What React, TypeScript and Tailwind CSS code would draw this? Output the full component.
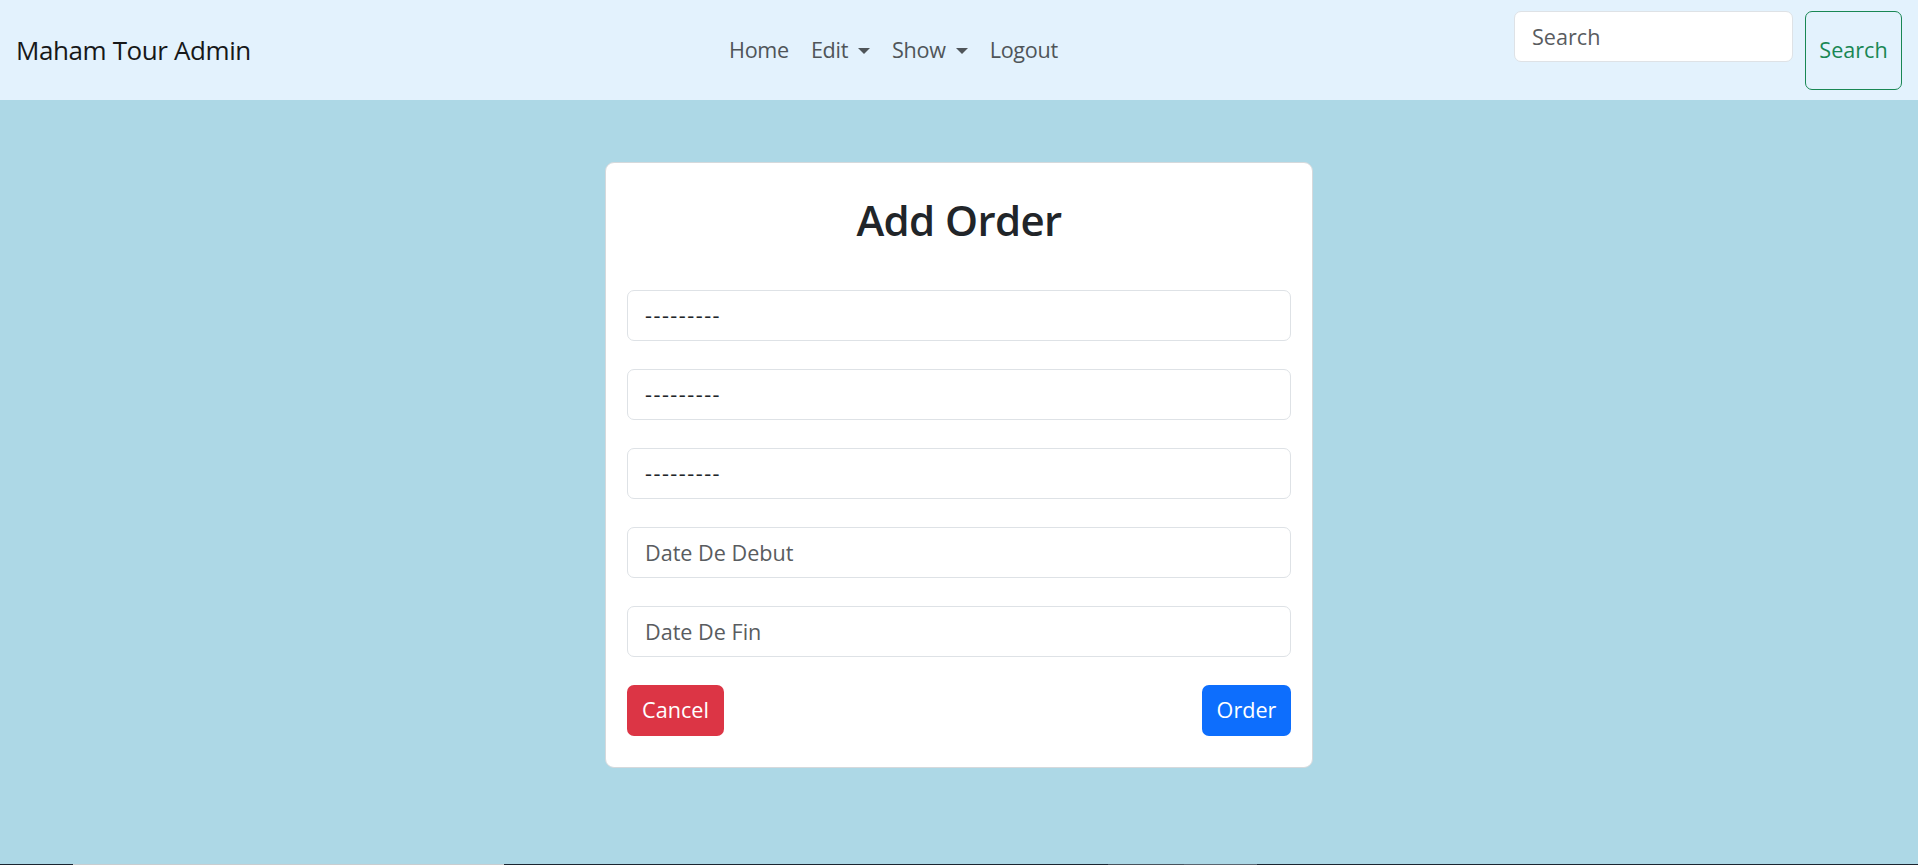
import { useState } from "react";

type Field = {
    kind: "select" | "text",
    label: string
}

const fields: Field[] = [
    { kind: "select", label: "---------" },
    { kind: "select", label: "---------" },
    { kind: "select", label: "---------" },
    { kind: "text", label: "Date De Debut" },
    { kind: "text", label: "Date De Fin" },
]

function Caret() {
    return (
        <span className="ml-[10px] inline-block h-0 w-0 border-x-[6px] border-t-[6px] border-x-transparent border-t-[#4f5559] align-[4px]"></span>
    )
}

function NavBar() {
    const [query, setQuery] = useState("")

    return (
        <nav className="flex h-[100px] items-center bg-[#e3f2fd] px-[16px]">
            <a href="#" className="mr-[22px] text-[26px] leading-[1.5] tracking-[-0.4px] text-[#171819]">
                Maham Tour Admin
            </a>
            <div className="flex flex-1">
                <ul className="mx-auto flex items-center text-[21.6px] leading-[1.5] tracking-[-0.3px] text-[#4f5559]">
                    <li><a href="#" className="block px-[11px]">Home</a></li>
                    <li><a href="#" className="block px-[11px]">Edit<Caret /></a></li>
                    <li><a href="#" className="block px-[11px]">Show<Caret /></a></li>
                    <li><a href="#" className="block px-[11px]">Logout</a></li>
                </ul>
            </div>
            <form className="flex items-start gap-[12px]" onSubmit={(e) => e.preventDefault()}>
                <input
                    value={query}
                    onChange={(e) => setQuery(e.target.value)}
                    placeholder="Search"
                    className="h-[51px] w-[279px] rounded-[7px] border border-[#dee2e6] bg-white px-[17px] text-[21.6px] text-[#212529] outline-none placeholder:text-[#595c5f]"
                />
                <button className="h-[79px] w-[97px] rounded-[7px] border border-[#198754] text-[21.6px] text-[#198754]">
                    Search
                </button>
            </form>
        </nav>
    )
}

function OrderForm() {
    return (
        <div className="mx-auto mt-[62px] w-[708px] rounded-[9px] border border-[#d5d9dc] bg-white px-[21px] pt-[31px] pb-[31px]">
            <h2 className="mb-[44px] text-center text-[42px] font-semibold leading-[1.23] tracking-[-0.6px] text-[#212529]">
                Add Order
            </h2>
            <div className="flex flex-col gap-[28px]">
                {fields.map((f, i) =>
                    f.kind === "select" ? (
                        <select key={i} className="h-[51px] w-full appearance-none rounded-[7px] border border-[#dee2e6] bg-white px-[17px] text-[21.6px] tracking-[1.5px] text-[#212529] outline-none">
                            <option>{f.label}</option>
                        </select>
                    ) : (
                        <input key={i} placeholder={f.label} className="h-[51px] w-full rounded-[7px] border border-[#dee2e6] bg-white px-[17px] text-[21.6px] text-[#212529] outline-none placeholder:text-[#595c5f]" />
                    )
                )}
            </div>
            <div className="mt-[28px] flex justify-between">
                <button className="h-[51px] w-[97px] rounded-[7px] bg-[#dc3545] text-[21.6px] text-white">Cancel</button>
                <button className="h-[51px] w-[89px] rounded-[7px] bg-[#0d6efd] text-[21.6px] text-white">Order</button>
            </div>
        </div>
    )
}

export default function App() {
    return (
        <div className="flex h-screen flex-col bg-[#add8e6] font-['Open_Sans',sans-serif]">
            <NavBar />
            <main className="flex-1">
                <OrderForm />
            </main>
            {/* taskbar edge at the bottom of the capture */}
            <div className="flex h-[1px]">
                <div className="w-[73px] bg-[#1b2530]"></div>
                <div className="w-[431px] bg-[#c9cdd0]"></div>
                <div className="w-[604px] bg-[#1b2530]"></div>
                <div className="w-[76px] bg-[#48525c]"></div>
                <div className="w-[73px] bg-[#5a6570]"></div>
                <div className="flex-1 bg-[#1b2530]"></div>
            </div>
        </div>
    )
}
